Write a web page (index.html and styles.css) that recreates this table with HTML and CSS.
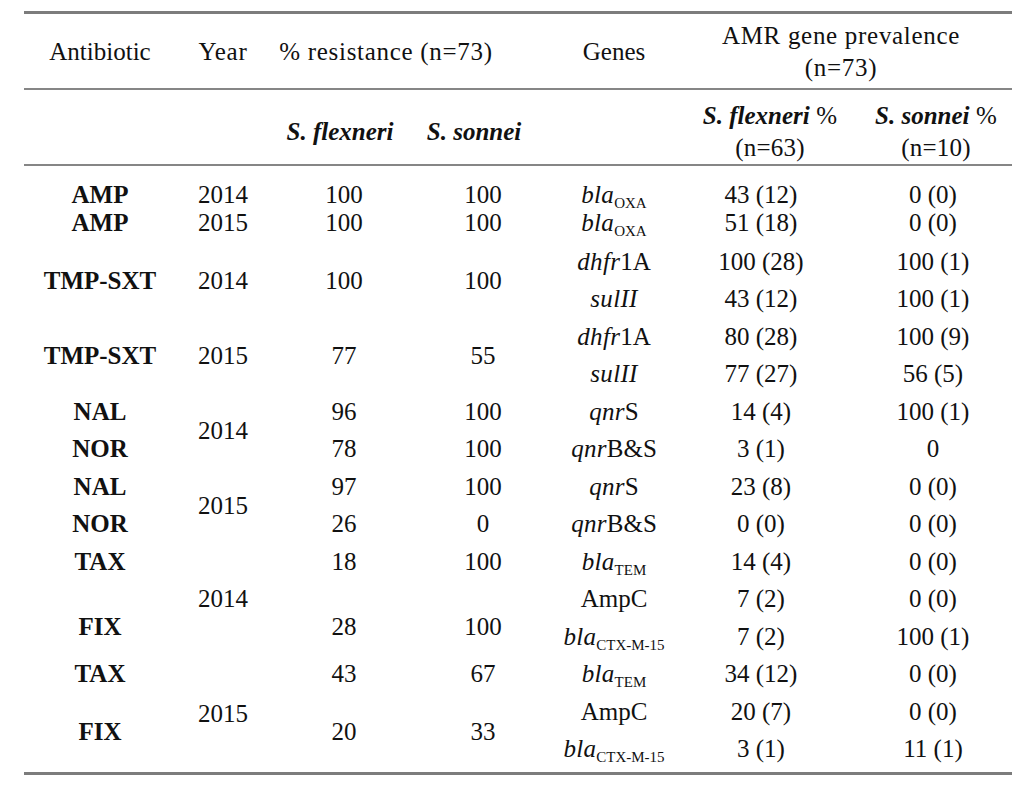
FILE: index.html
```html
<!DOCTYPE html>
<html lang="en">
<head>
<meta charset="utf-8">
<title>AMR table</title>
<link rel="stylesheet" href="styles.css">
</head>
<body>
<table class="amr">
  <colgroup>
    <col class="w1"><col class="w2"><col class="w3"><col class="w4"><col class="w5"><col class="w6"><col class="w7">
  </colgroup>
  <thead>
    <tr class="h1">
      <th class="hc1">Antibiotic</th>
      <th class="hc2">Year</th>
      <th class="hres" colspan="2">% resistance (n=73)</th>
      <th class="hc5">Genes</th>
      <th class="hamr" colspan="2">AMR gene prevalence<br>(n=73)</th>
    </tr>
    <tr class="h2">
      <th></th>
      <th></th>
      <th class="hc3"><i class="sp">S. flexneri</i></th>
      <th class="hc4"><i class="sp">S. sonnei</i></th>
      <th></th>
      <th class="hc6"><i class="sp">S. flexneri</i> %<br>(n=63)</th>
      <th class="hc7"><i class="sp">S. sonnei</i> %<br>(n=10)</th>
    </tr>
  </thead>
  <tbody>
    <tr class="r1">
      <td class="ab">AMP</td><td class="yr">2014</td><td class="c3">100</td><td class="c4">100</td>
      <td class="gn"><i>bla</i><sub>OXA</sub></td><td class="c6">43 (12)</td><td class="c7">0 (0)</td>
    </tr>
    <tr class="r2">
      <td class="ab">AMP</td><td class="yr">2015</td><td class="c3">100</td><td class="c4">100</td>
      <td class="gn"><i>bla</i><sub>OXA</sub></td><td class="c6">51 (18)</td><td class="c7">0 (0)</td>
    </tr>
    <tr class="s">
      <td class="ab" rowspan="2">TMP-SXT</td><td class="yr" rowspan="2">2014</td><td class="c3" rowspan="2">100</td><td class="c4" rowspan="2">100</td>
      <td class="gn"><i>dhfr</i>1A</td><td class="c6">100 (28)</td><td class="c7">100 (1)</td>
    </tr>
    <tr class="s">
      <td class="gn"><i>sulII</i></td><td class="c6">43 (12)</td><td class="c7">100 (1)</td>
    </tr>
    <tr class="s">
      <td class="ab" rowspan="2">TMP-SXT</td><td class="yr" rowspan="2">2015</td><td class="c3" rowspan="2">77</td><td class="c4" rowspan="2">55</td>
      <td class="gn"><i>dhfr</i>1A</td><td class="c6">80 (28)</td><td class="c7">100 (9)</td>
    </tr>
    <tr class="s">
      <td class="gn"><i>sulII</i></td><td class="c6">77 (27)</td><td class="c7">56 (5)</td>
    </tr>
    <tr class="s">
      <td class="ab">NAL</td><td class="yr" rowspan="2">2014</td><td class="c3">96</td><td class="c4">100</td>
      <td class="gn"><i>qnr</i>S</td><td class="c6">14 (4)</td><td class="c7">100 (1)</td>
    </tr>
    <tr class="s">
      <td class="ab">NOR</td><td class="c3">78</td><td class="c4">100</td>
      <td class="gn"><i>qnr</i>B&amp;S</td><td class="c6">3 (1)</td><td class="c7">0</td>
    </tr>
    <tr class="s">
      <td class="ab">NAL</td><td class="yr" rowspan="2">2015</td><td class="c3">97</td><td class="c4">100</td>
      <td class="gn"><i>qnr</i>S</td><td class="c6">23 (8)</td><td class="c7">0 (0)</td>
    </tr>
    <tr class="s">
      <td class="ab">NOR</td><td class="c3">26</td><td class="c4">0</td>
      <td class="gn"><i>qnr</i>B&amp;S</td><td class="c6">0 (0)</td><td class="c7">0 (0)</td>
    </tr>
    <tr class="s">
      <td class="ab">TAX</td><td class="yr" rowspan="3">2014</td><td class="c3">18</td><td class="c4">100</td>
      <td class="gn"><i>bla</i><sub>TEM</sub></td><td class="c6">14 (4)</td><td class="c7">0 (0)</td>
    </tr>
    <tr class="s">
      <td class="ab low" rowspan="2">FIX</td><td class="c3 low" rowspan="2">28</td><td class="c4 low" rowspan="2">100</td>
      <td class="gn">AmpC</td><td class="c6">7 (2)</td><td class="c7">0 (0)</td>
    </tr>
    <tr class="s">
      <td class="gn"><i>bla</i><sub>CTX-M-15</sub></td><td class="c6">7 (2)</td><td class="c7">100 (1)</td>
    </tr>
    <tr class="s">
      <td class="ab">TAX</td><td class="yr" rowspan="3">2015</td><td class="c3">43</td><td class="c4">67</td>
      <td class="gn"><i>bla</i><sub>TEM</sub></td><td class="c6">34 (12)</td><td class="c7">0 (0)</td>
    </tr>
    <tr class="s">
      <td class="ab" rowspan="2">FIX</td><td class="c3" rowspan="2">20</td><td class="c4" rowspan="2">33</td>
      <td class="gn">AmpC</td><td class="c6">20 (7)</td><td class="c7">0 (0)</td>
    </tr>
    <tr class="s last">
      <td class="gn"><i>bla</i><sub>CTX-M-15</sub></td><td class="c6">3 (1)</td><td class="c7">11 (1)</td>
    </tr>
  </tbody>
</table>
</body>
</html>
```
FILE: styles.css
```css
html, body {
  margin: 0;
  padding: 0;
  background: #ffffff;
}

body {
  padding: 11px 0 0 24px;
  font-family: "Liberation Serif", "Times New Roman", serif;
  color: #111111;
}

.amr {
  width: 988px;
  table-layout: fixed;
  border-collapse: separate;
  border-spacing: 0;
  border-top: 3px solid #7c7c7c;
  border-bottom: 3px solid #7c7c7c;
  font-size: 25px;
}

.w1 { width: 152px; }
.w2 { width: 94px; }
.w3 { width: 140px; }
.w4 { width: 120px; }
.w5 { width: 168px; }
.w6 { width: 152px; }
.w7 { width: 162px; }

.amr th,
.amr td {
  padding: 0;
  text-align: center;
  vertical-align: middle;
  white-space: nowrap;
}

.amr th {
  font-weight: normal;
  letter-spacing: 0.7px;
  border-bottom: 2px solid #868686;
  line-height: 32px;
}

.amr .h1 { height: 76px; }
.amr .h1 th { padding-top: 2px; }
.amr .h2 { height: 76px; }
.amr .h2 th { padding-top: 10px; }

.amr th.hres { padding-right: 28px; }
.amr th.hamr { padding-right: 28px; }
.amr th.hc1, .amr th.hc5 { letter-spacing: 0; }
.amr .h2 th.hc4 { padding-left: 8px; }
.amr .h2 th.hc6 { padding-right: 8px; letter-spacing: 0.2px; }
.amr .h2 th.hc7 { padding-left: 10px; letter-spacing: 0.2px; }

.sp {
  font-weight: bold;
  font-style: italic;
  letter-spacing: 0;
}

.amr td {
  line-height: 28px;
}

.amr td.ab { font-weight: bold; }
.amr td.c3 { padding-left: 8px; }
.amr td.c4 { padding-left: 26px; }
.amr td.c6 { padding-right: 26px; }
.amr td.c7 { padding-left: 4px; }

.gn i { letter-spacing: 0.3px; }
.gn sub {
  font-size: 15px;
  vertical-align: -5px;
  line-height: 0;
  letter-spacing: 0;
}

.amr .r1 { height: 43px; }
.amr .r1 td { padding-top: 14px; }
.amr .r2 { height: 34px; }
.amr .r2 td { padding-bottom: 6px; }
.amr .s { height: 37.5px; }
.amr .s.last { height: 41px; }
.amr .s.last td { padding-bottom: 4px; }

.amr td.low { padding-top: 18px; }
```
